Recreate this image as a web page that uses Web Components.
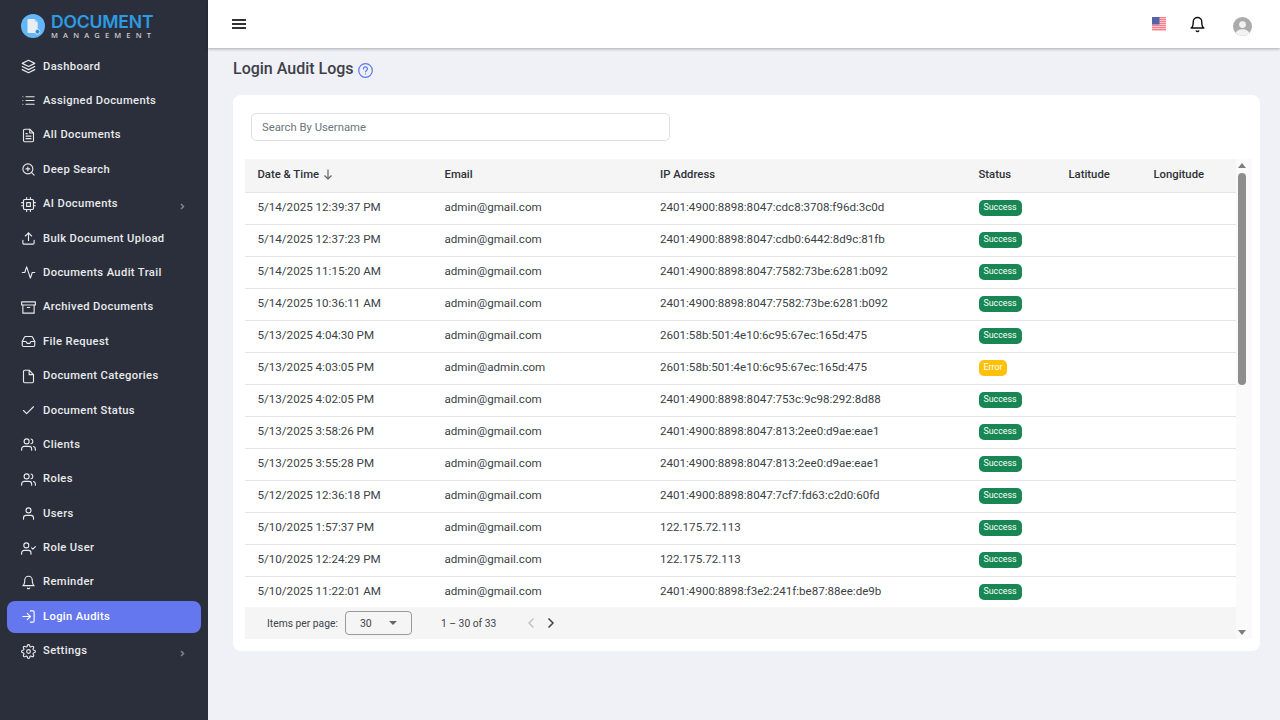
<!DOCTYPE html>
<html lang="en">
<head>
<meta charset="utf-8">
<title>Login Audit Logs</title>
<style>
  html, body { margin: 0; height: 100%; }
  body { font-family: Roboto, "Liberation Sans", sans-serif; overflow: hidden; }
</style>
</head>
<body>
<app-shell>
  <side-bar slot="side">
    <nav-item icon="layers">Dashboard</nav-item>
    <nav-item icon="list">Assigned Documents</nav-item>
    <nav-item icon="fileText">All Documents</nav-item>
    <nav-item icon="zoomIn">Deep Search</nav-item>
    <nav-item icon="cpu" chevron>AI Documents</nav-item>
    <nav-item icon="upload">Bulk Document Upload</nav-item>
    <nav-item icon="activity">Documents Audit Trail</nav-item>
    <nav-item icon="archive">Archived Documents</nav-item>
    <nav-item icon="inbox">File Request</nav-item>
    <nav-item icon="file">Document Categories</nav-item>
    <nav-item icon="check">Document Status</nav-item>
    <nav-item icon="users">Clients</nav-item>
    <nav-item icon="users">Roles</nav-item>
    <nav-item icon="user">Users</nav-item>
    <nav-item icon="userCheck">Role User</nav-item>
    <nav-item icon="bell">Reminder</nav-item>
    <nav-item icon="logIn" active>Login Audits</nav-item>
    <nav-item icon="settings" chevron>Settings</nav-item>
  </side-bar>
  <top-bar slot="top"></top-bar>
  <page-title>Login Audit Logs</page-title>
  <content-card>
    <search-box placeholder="Search By Username"></search-box>
    <audit-table></audit-table>
  </content-card>
</app-shell>

<script>
// feather style icon bodies, all on a 24x24 box
const ICONS = {
  layers: '<polygon points="12 2 2 7 12 12 22 7 12 2"/><polyline points="2 17 12 22 22 17"/><polyline points="2 12 12 17 22 12"/>',
  list: '<line x1="8" y1="6" x2="21" y2="6"/><line x1="8" y1="12" x2="21" y2="12"/><line x1="8" y1="18" x2="21" y2="18"/><line x1="3" y1="6" x2="3.01" y2="6"/><line x1="3" y1="12" x2="3.01" y2="12"/><line x1="3" y1="18" x2="3.01" y2="18"/>',
  fileText: '<path d="M14 2H6a2 2 0 0 0-2 2v16a2 2 0 0 0 2 2h12a2 2 0 0 0 2-2V8z"/><polyline points="14 2 14 8 20 8"/><line x1="16" y1="13" x2="8" y2="13"/><line x1="16" y1="17" x2="8" y2="17"/><polyline points="10 9 9 9 8 9"/>',
  zoomIn: '<circle cx="11" cy="11" r="8"/><line x1="21" y1="21" x2="16.65" y2="16.65"/><line x1="11" y1="8" x2="11" y2="14"/><line x1="8" y1="11" x2="14" y2="11"/>',
  cpu: '<rect x="4" y="4" width="16" height="16" rx="2"/><rect x="9" y="9" width="6" height="6"/><line x1="9" y1="1" x2="9" y2="4"/><line x1="15" y1="1" x2="15" y2="4"/><line x1="9" y1="20" x2="9" y2="23"/><line x1="15" y1="20" x2="15" y2="23"/><line x1="20" y1="9" x2="23" y2="9"/><line x1="20" y1="14" x2="23" y2="14"/><line x1="1" y1="9" x2="4" y2="9"/><line x1="1" y1="14" x2="4" y2="14"/>',
  upload: '<path d="M21 15v4a2 2 0 0 1-2 2H5a2 2 0 0 1-2-2v-4"/><polyline points="17 8 12 3 7 8"/><line x1="12" y1="3" x2="12" y2="15"/>',
  activity: '<polyline points="22 12 18 12 15 21 9 3 6 12 2 12"/>',
  archive: '<polyline points="21 8 21 21 3 21 3 8"/><rect x="1" y="3" width="22" height="5"/><line x1="10" y1="12" x2="14" y2="12"/>',
  inbox: '<polyline points="22 12 16 12 14 15 10 15 8 12 2 12"/><path d="M5.45 5.11L2 12v6a2 2 0 0 0 2 2h16a2 2 0 0 0 2-2v-6l-3.45-6.89A2 2 0 0 0 16.76 4H7.24a2 2 0 0 0-1.79 1.11z"/>',
  file: '<path d="M13 2H6a2 2 0 0 0-2 2v16a2 2 0 0 0 2 2h12a2 2 0 0 0 2-2V9z"/><polyline points="13 2 13 9 20 9"/>',
  check: '<polyline points="20 6 9 17 4 12"/>',
  users: '<path d="M17 21v-2a4 4 0 0 0-4-4H5a4 4 0 0 0-4 4v2"/><circle cx="9" cy="7" r="4"/><path d="M23 21v-2a4 4 0 0 0-3-3.87"/><path d="M16 3.13a4 4 0 0 1 0 7.75"/>',
  user: '<path d="M20 21v-2a4 4 0 0 0-4-4H8a4 4 0 0 0-4 4v2"/><circle cx="12" cy="7" r="4"/>',
  userCheck: '<path d="M16 21v-2a4 4 0 0 0-4-4H5a4 4 0 0 0-4 4v2"/><circle cx="8.5" cy="7" r="4"/><polyline points="17 11 19 13 23 9"/>',
  bell: '<path d="M18 8A6 6 0 0 0 6 8c0 7-3 9-3 9h18s-3-2-3-9"/><path d="M13.73 21a2 2 0 0 1-3.46 0"/>',
  logIn: '<path d="M15 3h4a2 2 0 0 1 2 2v14a2 2 0 0 1-2 2h-4"/><polyline points="10 17 15 12 10 7"/><line x1="15" y1="12" x2="3" y2="12"/>',
  settings: '<circle cx="12" cy="12" r="3"/><path d="M19.4 15a1.65 1.65 0 0 0 .33 1.82l.06.06a2 2 0 0 1 0 2.83 2 2 0 0 1-2.83 0l-.06-.06a1.65 1.65 0 0 0-1.82-.33 1.65 1.65 0 0 0-1 1.51V21a2 2 0 0 1-2 2 2 2 0 0 1-2-2v-.09A1.65 1.65 0 0 0 9 19.4a1.65 1.65 0 0 0-1.82.33l-.06.06a2 2 0 0 1-2.83 0 2 2 0 0 1 0-2.83l.06-.06a1.65 1.65 0 0 0 .33-1.82 1.65 1.65 0 0 0-1.51-1H3a2 2 0 0 1-2-2 2 2 0 0 1 2-2h.09A1.65 1.65 0 0 0 4.6 9a1.65 1.65 0 0 0-.33-1.82l-.06-.06a2 2 0 0 1 0-2.83 2 2 0 0 1 2.83 0l.06.06a1.65 1.65 0 0 0 1.82.33H9a1.65 1.65 0 0 0 1-1.51V3a2 2 0 0 1 2-2 2 2 0 0 1 2 2v.09a1.65 1.65 0 0 0 1 1.51 1.65 1.65 0 0 0 1.82-.33l.06-.06a2 2 0 0 1 2.83 0 2 2 0 0 1 0 2.83l-.06.06a1.65 1.65 0 0 0-.33 1.82V9a1.65 1.65 0 0 0 1.51 1H21a2 2 0 0 1 2 2 2 2 0 0 1-2 2h-.09a1.65 1.65 0 0 0-1.51 1z"/>'
};

function icon(name, size, width = 2) {
  return `<svg width="${size}" height="${size}" viewBox="0 0 24 24" fill="none" stroke="currentColor" stroke-width="${width}" stroke-linecap="round" stroke-linejoin="round">${ICONS[name]}</svg>`;
}

class AppShell extends HTMLElement {
  constructor() {
    super();
    this.attachShadow({ mode: 'open' });
    this.shadowRoot.innerHTML = `
      <style>
        :host { display: flex; width: 1280px; height: 720px; background: #f0f1f7; color: #3b3f46; }
        main { flex: 1; min-width: 0; display: flex; flex-direction: column; }
        .page { padding: 9px 20px 0 25px; display: flex; flex-direction: column; }
      </style>
      <slot name="side"></slot>
      <main>
        <slot name="top"></slot>
        <div class="page"><slot></slot></div>
      </main>
    `;
  }
}
customElements.define('app-shell', AppShell);

class SideBar extends HTMLElement {
  constructor() {
    super();
    this.attachShadow({ mode: 'open' });
    this.shadowRoot.innerHTML = `
      <style>
        :host { display: block; width: 208px; flex: none; height: 720px; background: #2b2f3b; box-sizing: border-box; padding: 0 7px; }
        .logo { height: 50.6px; box-sizing: border-box; padding: 14px 0 0 14px; display: flex; gap: 6px; }
        .words { display: flex; flex-direction: column; }
        .name { font: 600 17.6px/15px Inter, "Open Sans", sans-serif; color: #2c9be3; letter-spacing: -.2px; }
        .sub { font: 600 7.5px/8px "Open Sans", sans-serif; color: #c9cbd0; letter-spacing: 5.15px; margin-top: 2px; }
        nav { display: flex; flex-direction: column; gap: 2.4px; }
      </style>
      <div class="logo">
        <svg width="24" height="24" viewBox="0 0 24 24">
          <circle cx="12" cy="12" r="12" fill="#63b6f7"/>
          <path d="M7.500 5h6l3.200 3.200V18a1 1 0 0 1-1 1H7.500a1 1 0 0 1-1-1V6a1 1 0 0 1 1-1z" fill="#e9eef3"/>
          <path d="M13.500 5l3.200 3.200h-3.200z" fill="#cfd6de"/>
          <circle cx="16.500" cy="17.700" r="2.400" fill="#3b86d6" stroke="#e9eef3" stroke-width=".8"/>
        </svg>
        <div class="words">
          <span class="name">DOCUMENT</span>
          <span class="sub">MANAGEMENT</span>
        </div>
      </div>
      <nav><slot></slot></nav>
    `;
  }
}
customElements.define('side-bar', SideBar);

class NavItem extends HTMLElement {
  constructor() {
    super();
    this.attachShadow({ mode: 'open' });
  }
  connectedCallback() {
    const chevron = this.hasAttribute('chevron')
      ? '<svg class="chev" width="5" height="7" viewBox="0 0 5 7" fill="none" stroke="#80838b" stroke-width="1.500"><polyline points="1 1 3.500 3.500 1 6"/></svg>'
      : '';
    this.shadowRoot.innerHTML = `
      <style>
        :host { display: flex; align-items: center; height: 32px; border-radius: 8px; padding-left: 14px; gap: 7px; color: #e9eaec;
          font: 500 11.2px/16px Roboto, sans-serif; letter-spacing: .37px; }
        :host([active]) { background: #6577ef; color: #fff; }
        svg { flex: none; display: block; }
        .ico { width: 15px; height: 15px; }
        .chev { margin-left: auto; margin-right: 16px; margin-top: 5px; }
      </style>
      ${icon(this.getAttribute('icon'), 15, 1.8).replace('<svg ', '<svg class="ico" ')}
      <slot></slot>
      ${chevron}
    `;
  }
}
customElements.define('nav-item', NavItem);

class TopBar extends HTMLElement {
  constructor() {
    super();
    this.attachShadow({ mode: 'open' });
    let stripes = '';
    for (let i = 0; i < 7; i++) stripes += `<rect y="${i * 2}" width="14" height="1.200" fill="#f77f8c"/>`;
    this.shadowRoot.innerHTML = `
      <style>
        :host { display: flex; align-items: center; height: 48px; flex: none; background: #fff; box-shadow: 0 1px 3px rgba(0,0,0,.3); padding: 0 28.5px 0 24px; position: relative; }
        svg { display: block; flex: none; }
        .menu { width: 14px; height: 10px; margin-right: auto; }
        .flag { margin: 0 23px 0 0; }
        .bell { color: #111; margin: 0 27px 0 0; }
        .avatar { margin-top: 5px; }
      </style>
      <svg class="menu" viewBox="0 0 14 10" fill="#333"><rect width="14" height="2"/><rect y="4" width="14" height="2"/><rect y="8" width="14" height="2"/></svg>
      <svg class="flag" width="14" height="14" viewBox="0 0 14 14">
        <rect width="14" height="14" fill="#ffd9dc"/>${stripes}
        <rect width="7.500" height="7.500" fill="#5462a8"/>
      </svg>
      <svg class="bell" width="17" height="17" viewBox="0 0 24 24" fill="none" stroke="currentColor" stroke-width="2" stroke-linecap="round" stroke-linejoin="round">${ICONS.bell}</svg>
      <svg class="avatar" width="19" height="19" viewBox="0 0 20 20">
        <defs><clipPath id="c"><circle cx="10" cy="10" r="10"/></clipPath></defs>
        <g clip-path="url(#c)">
          <rect width="20" height="20" fill="#ababab"/>
          <circle cx="10" cy="8" r="3.600" fill="#f2f2f2"/>
          <ellipse cx="10" cy="18" rx="7.500" ry="5" fill="#f2f2f2"/>
        </g>
      </svg>
    `;
  }
}
customElements.define('top-bar', TopBar);

class PageTitle extends HTMLElement {
  constructor() {
    super();
    this.attachShadow({ mode: 'open' });
    this.shadowRoot.innerHTML = `
      <style>
        :host { display: flex; align-items: center; gap: 4px; height: 24px; margin-bottom: 14px; font: 500 16px/24px Roboto, sans-serif; color: #3d4047; }
        svg { display: block; margin-top: 3px; }
      </style>
      <slot></slot>
      <svg width="15" height="15" viewBox="0 0 15 15" fill="none" stroke="#5f75ee" stroke-width="1.200">
        <circle cx="7.500" cy="7.500" r="6.800"/>
        <path d="M5.500 5.900a2 2 0 0 1 4 .1c0 1.300-2 1.500-2 2.800" stroke-linecap="round"/>
        <line x1="7.500" y1="10.400" x2="7.500" y2="11.400"/>
      </svg>
    `;
  }
}
customElements.define('page-title', PageTitle);

class ContentCard extends HTMLElement {
  constructor() {
    super();
    this.attachShadow({ mode: 'open' });
    this.shadowRoot.innerHTML = `
      <style>
        :host { display: block; background: #fff; border-radius: 8px; padding: 18px 8px 12px 12px; }
      </style>
      <slot></slot>
    `;
  }
}
customElements.define('content-card', ContentCard);

class SearchBox extends HTMLElement {
  constructor() {
    super();
    this.attachShadow({ mode: 'open' });
    this.shadowRoot.innerHTML = `
      <style>
        :host { display: block; width: 418.5px; margin: 0 0 18px 6px; }
        input { display: block; width: 100%; height: 28px; box-sizing: border-box; border: 1px solid #dfe1e6; border-radius: 5px; padding: 0 10px;
          font: 400 11.3px Roboto, sans-serif; color: #333; outline: none; background: #fff; }
        input::placeholder { color: #6c757d; opacity: 1; }
      </style>
      <input type="text" placeholder="${this.getAttribute('placeholder')}">
    `;
  }
}
customElements.define('search-box', SearchBox);

class StatusBadge extends HTMLElement {
  constructor() {
    super();
    this.attachShadow({ mode: 'open' });
    this.shadowRoot.innerHTML = `
      <style>
        :host { display: inline-block; height: 16px; padding: 0 5px; border-radius: 5px; background: #198754; color: #fff; font: 400 8.8px/15px Roboto, sans-serif; vertical-align: middle; }
        :host([kind="error"]) { background: #ffc107; }
      </style>
      <slot></slot>
    `;
  }
}
customElements.define('status-badge', StatusBadge);

const ROWS = [
  ['5/14/2025 12:39:37 PM', 'admin@gmail.com', '2401:4900:8898:8047:cdc8:3708:f96d:3c0d', 'Success'],
  ['5/14/2025 12:37:23 PM', 'admin@gmail.com', '2401:4900:8898:8047:cdb0:6442:8d9c:81fb', 'Success'],
  ['5/14/2025 11:15:20 AM', 'admin@gmail.com', '2401:4900:8898:8047:7582:73be:6281:b092', 'Success'],
  ['5/14/2025 10:36:11 AM', 'admin@gmail.com', '2401:4900:8898:8047:7582:73be:6281:b092', 'Success'],
  ['5/13/2025 4:04:30 PM', 'admin@gmail.com', '2601:58b:501:4e10:6c95:67ec:165d:475', 'Success'],
  ['5/13/2025 4:03:05 PM', 'admin@admin.com', '2601:58b:501:4e10:6c95:67ec:165d:475', 'Error'],
  ['5/13/2025 4:02:05 PM', 'admin@gmail.com', '2401:4900:8898:8047:753c:9c98:292:8d88', 'Success'],
  ['5/13/2025 3:58:26 PM', 'admin@gmail.com', '2401:4900:8898:8047:813:2ee0:d9ae:eae1', 'Success'],
  ['5/13/2025 3:55:28 PM', 'admin@gmail.com', '2401:4900:8898:8047:813:2ee0:d9ae:eae1', 'Success'],
  ['5/12/2025 12:36:18 PM', 'admin@gmail.com', '2401:4900:8898:8047:7cf7:fd63:c2d0:60fd', 'Success'],
  ['5/10/2025 1:57:37 PM', 'admin@gmail.com', '122.175.72.113', 'Success'],
  ['5/10/2025 12:24:29 PM', 'admin@gmail.com', '122.175.72.113', 'Success'],
  ['5/10/2025 11:22:01 AM', 'admin@gmail.com', '2401:4900:8898:f3e2:241f:be87:88ee:de9b', 'Success']
];

class AuditTable extends HTMLElement {
  constructor() {
    super();
    this.attachShadow({ mode: 'open' });
    const rows = ROWS.map(r => `
      <tr>
        <td>${r[0]}</td><td>${r[1]}</td><td>${r[2]}</td>
        <td class="st"><status-badge kind="${r[3].toLowerCase()}">${r[3]}</status-badge></td>
        <td></td><td></td>
      </tr>`).join('');
    this.shadowRoot.innerHTML = `
      <style>
        :host { display: flex; height: 480px; color: #3b3f46; }
        .col { width: 991px; flex: none; display: flex; flex-direction: column; }
        .scroll { height: 448px; overflow: hidden; }
        table { width: 100%; table-layout: fixed; border-collapse: collapse; font: 400 11.6px/16px Roboto, sans-serif; }
        th { height: 33px; padding: 0 0 0 12.5px; background: #f5f5f5; text-align: left; font-weight: 500; font-size: 11.3px; color: #2e3138; border-bottom: 1px solid #e4e4e4; box-sizing: border-box; }
        th svg { vertical-align: -2px; margin-left: 1px; }
        td { height: 32px; padding: 0 0 2px 12.5px; border-bottom: 1px solid #e4e4e4; box-sizing: border-box; white-space: nowrap; }
        td.st { padding-bottom: 0; }
        .pager { height: 32px; flex: none; background: #f5f5f5; display: flex; align-items: center; font-size: 10.3px; color: #41444b; padding-left: 22px; }
        .select { width: 67px; height: 24px; box-sizing: border-box; border: 1px solid #999; border-radius: 4px; margin: 0 29px 0 7px; display: flex; align-items: center; justify-content: space-between; padding: 0 14px 0 14px; font-size: 10.5px; }
        .caret { width: 0; height: 0; border: 4px solid transparent; border-top: 4px solid #666; border-bottom: 0; }
        .nav { display: flex; gap: 12px; margin-left: 31px; }
        .nav svg { display: block; }
        .bar { width: 16px; flex: none; background: #fafafa; position: relative; }
        .up, .down { position: absolute; left: 2px; width: 0; height: 0; border: 4.500px solid transparent; }
        .up { top: 4px; border-top: 0; border-bottom: 5px solid #7e7e7e; }
        .down { bottom: 4px; border-bottom: 0; border-top: 5px solid #7e7e7e; }
        .thumb { position: absolute; left: 2px; width: 8px; top: 14px; height: 212px; border-radius: 4px; background: #8d8d8d; }
      </style>
      <div class="col">
        <div class="scroll">
          <table>
            <colgroup><col style="width:187px"><col style="width:215.5px"><col style="width:318.5px"><col style="width:90px"><col style="width:85px"><col style="width:95px"></colgroup>
            <thead><tr>
              <th>Date &amp; Time <svg width="10" height="11" viewBox="0 0 10 11" fill="none" stroke="#666" stroke-width="1.200"><path d="M5 .5v9.500M1.500 6.500L5 10l3.500-3.500"/></svg></th>
              <th>Email</th><th>IP Address</th><th>Status</th><th>Latitude</th><th>Longitude</th>
            </tr></thead>
            <tbody>${rows}</tbody>
          </table>
        </div>
        <div class="pager">
          <span>Items per page:</span>
          <div class="select"><span>30</span><i class="caret"></i></div>
          <span>1 – 30 of 33</span>
          <div class="nav">
            <svg width="8" height="12" viewBox="0 0 8 12" fill="none" stroke="#c4c4c4" stroke-width="1.500"><polyline points="6.500 1.500 2 6 6.500 10.500"/></svg>
            <svg width="8" height="12" viewBox="0 0 8 12" fill="none" stroke="#444" stroke-width="1.500"><polyline points="1.500 1.500 6 6 1.500 10.500"/></svg>
          </div>
        </div>
      </div>
      <div class="bar"><i class="up"></i><i class="thumb"></i><i class="down"></i></div>
    `;
  }
}
customElements.define('audit-table', AuditTable);
</script>
</body>
</html>
